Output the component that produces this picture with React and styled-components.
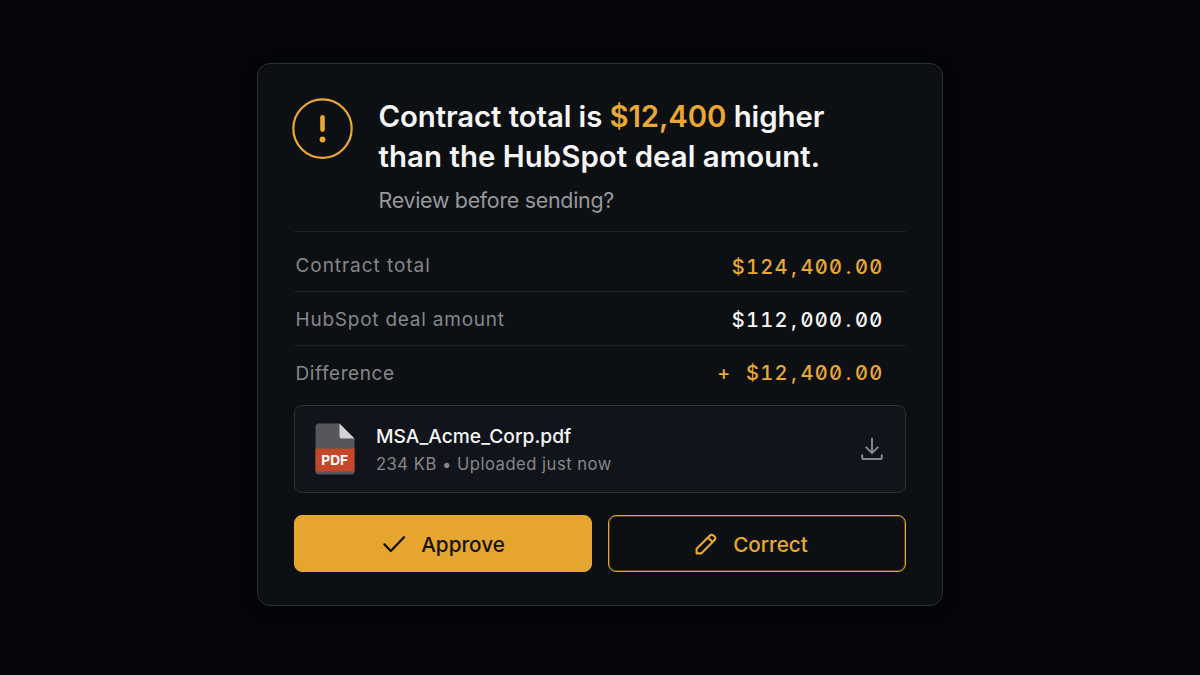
import React from 'react'
import styled, { createGlobalStyle } from 'styled-components'

const colors = {
    page: '#040609',
    card: '#0c1013',
    panel: '#11141a',
    border: '#2d3033',
    line: '#1e2124',
    amber: '#e9a832',
    white: '#f6f6f7',
    grey: '#97989d',
    darkGrey: '#85878c'
}

const rows = [
    { label: 'Contract total', value: '$124,400.00', color: colors.amber, height: 60, top: 8, shift: 3, spacing: 0.95 },
    { label: 'HubSpot deal amount', value: '$112,000.00', color: colors.white, height: 54, top: 2, shift: 1, spacing: 0.77 },
    { label: 'Difference', value: '+ $12,400.00', color: colors.amber, height: 60, top: -5, shift: 0, spacing: 0.6 }
]

// commas, dots and spaces are padded so they take as much room as a digit
const Amount = ({ value, color, shift }) => (
    <Value $color={color} $shift={shift}>
        {value.split(/([,. ])/).map((part, i) => (
            /[,. ]/.test(part) ? <Mark key={i} $space={part == ' '}>{part}</Mark> : part
        ))}
    </Value>
)

const AlertIcon = () => (
    <svg width="62" height="62" viewBox="0 0 62 62" fill="none">
        <circle cx="31.5" cy="30.6" r="29.2" stroke={colors.amber} strokeWidth="2.2" />
        <path d="M31.5 19.2v12.4" stroke={colors.amber} strokeWidth="4.6" strokeLinecap="round" />
        <circle cx="31.5" cy="41.5" r="2.9" fill={colors.amber} />
    </svg>
)

const FileIcon = () => (
    <svg width="40" height="52" viewBox="0 0 40 52">
        <path d="M4 .5h20.5L39.5 15.5V48a3.5 3.5 0 0 1-3.5 3.5H4A3.5 3.5 0 0 1 .5 48V4A3.5 3.5 0 0 1 4 .5z" fill="#55575b" />
        <path d="M24.5 .5 39.5 15.5H27a2.5 2.5 0 0 1-2.5-2.5z" fill="#d3d4d6" />
        <path d="M.5 25.5h39v23h-39z" fill="#c4472a" />
        <text x="19.7" y="41.8" textAnchor="middle" fontFamily="Inter, sans-serif" fontSize="13.8" fontWeight="700" fill="#fff">PDF</text>
    </svg>
)

const DownloadIcon = () => (
    <svg width="24" height="24" viewBox="0 0 24 24" fill="none" stroke={colors.darkGrey} strokeWidth="2" strokeLinecap="round" strokeLinejoin="round">
        <path d="M12 1.6v14" />
        <path d="m6.2 10.4 5.8 5.6 5.8-5.6" />
        <path d="M2.2 18.2v2.2a1.6 1.6 0 0 0 1.6 1.6h16.4a1.6 1.6 0 0 0 1.6-1.6v-2.2" />
    </svg>
)

const CheckIcon = () => (
    <svg width="24" height="24" viewBox="0 0 24 24" fill="none" stroke="#14120c" strokeWidth="2.3" strokeLinecap="round" strokeLinejoin="round">
        <path d="m2.4 12.4 6.4 6.6L22 5.2" />
    </svg>
)

const PencilIcon = () => (
    <svg width="24" height="24" viewBox="0 0 24 24" fill="none" stroke={colors.amber} strokeWidth="2.1" strokeLinejoin="round">
        <path d="M2.6 21.4v-4.6L16 3.4a2.4 2.4 0 0 1 3.4 0l1.2 1.2a2.4 2.4 0 0 1 0 3.4L7.2 21.4z" />
        <path d="m14 5.4 4.6 4.6" />
    </svg>
)

const App = () => {
    return (
        <Page>
            <GlobalStyle />
            <Card>
                <Header>
                    <AlertIcon />
                    <div>
                        <Title>
                            <TitleLine $spacing={-0.1}>Contract total is <Highlight>$12,400</Highlight> higher</TitleLine>
                            <TitleLine $spacing={0.05}>than the HubSpot deal amount.</TitleLine>
                        </Title>
                        <Subtitle>Review before sending?</Subtitle>
                    </div>
                </Header>
                {rows.map((row) => (
                    <Row key={row.label} $height={row.height} $top={row.top}>
                        <Label $spacing={row.spacing}>{row.label}</Label>
                        <Amount value={row.value} color={row.color} shift={row.shift} />
                    </Row>
                ))}
                <File>
                    <FileIcon />
                    <FileInfo>
                        <FileName>MSA_Acme_Corp.pdf</FileName>
                        <FileMeta>234 KB • Uploaded just now</FileMeta>
                    </FileInfo>
                    <DownloadIcon />
                </File>
                <Actions>
                    <Button $primary>
                        <CheckIcon />
                        <ButtonText>Approve</ButtonText>
                    </Button>
                    <Button>
                        <PencilIcon />
                        <ButtonText>Correct</ButtonText>
                    </Button>
                </Actions>
            </Card>
        </Page>
    )
}

export default App


const GlobalStyle = createGlobalStyle`
    * {
        box-sizing: border-box;
    }
    body {
        margin: 0;
        background: ${colors.page};
        font-family: Inter, "Liberation Sans", sans-serif;
    }
    svg {
        display: block;
        flex-shrink: 0;
    }
`

const Page = styled.div`
    display: flex;
    justify-content: center;
    align-items: flex-start;
    height: 675px;
    padding-top: 63px;
`

const Card = styled.div`
    width: 686px;
    height: 543px;
    padding: 33px 36px 0;
    background: ${colors.card};
    border: 1px solid ${colors.border};
    border-radius: 13px;
    box-shadow: 0 4px 16px rgba(0, 0, 0, 0.5);
`

const Header = styled.div`
    display: flex;
    gap: 25.5px;
    height: 134px;
    margin-left: -3px;

    > svg {
        margin-top: 1px;
    }
`

const Title = styled.h1`
    margin: 0;
    font-size: 29.4px;
    font-weight: 600;
    line-height: 40px;
    color: ${colors.white};
    white-space: nowrap;
`

const TitleLine = styled.span`
    display: block;
    letter-spacing: ${(p) => p.$spacing}px;
`

const Highlight = styled.span`
    color: ${colors.amber};
`

const Subtitle = styled.p`
    margin: 9px 0 0;
    font-size: 21.4px;
    line-height: 28px;
    letter-spacing: -0.28px;
    color: ${colors.grey};
`

const Row = styled.div`
    display: flex;
    justify-content: space-between;
    align-items: center;
    height: ${(p) => p.$height}px;
    padding: ${(p) => p.$top > 0 ? p.$top : 0}px 22.5px ${(p) => p.$top < 0 ? -p.$top : 0}px 1.5px;
    border-top: 1px solid ${colors.line};
`

const Label = styled.span`
    font-size: 19px;
    letter-spacing: ${(p) => p.$spacing}px;
    color: ${colors.darkGrey};
`

const Value = styled.span`
    padding-top: ${(p) => p.$shift}px;
    font-size: 20px;
    font-weight: 500;
    font-feature-settings: 'tnum', 'zero';
    letter-spacing: 1.25px;
    color: ${(p) => p.$color};
    white-space: pre;
`

const Mark = styled.span`
    padding: 0 ${(p) => p.$space ? 4 : 2.65}px;
`

const File = styled.div`
    display: flex;
    align-items: center;
    height: 88px;
    padding: 0 21px 0 20px;
    background: ${colors.panel};
    border: 1px solid ${colors.border};
    border-radius: 8px;
`

const FileInfo = styled.div`
    flex: 1;
    margin-left: 21px;
    padding-top: 2px;
`

const FileName = styled.div`
    font-size: 19.2px;
    font-weight: 500;
    line-height: 28px;
    color: ${colors.white};
`

const FileMeta = styled.div`
    font-size: 16.6px;
    line-height: 28px;
    letter-spacing: 0.5px;
    color: ${colors.darkGrey};
`

const Actions = styled.div`
    display: grid;
    grid-template-columns: 1fr 1fr;
    gap: 16px;
    margin-top: 22px;
`

const Button = styled.button`
    display: flex;
    justify-content: center;
    align-items: center;
    gap: 15px;
    height: 57px;
    padding: 0 ${(p) => p.$primary ? 0 : 13}px 0 1px;
    background: ${(p) => p.$primary ? '#e6a52e' : 'transparent'};
    border: 1px solid ${colors.amber};
    border-radius: 8px;
    box-shadow: inset 0 0 0 1px rgba(233, 168, 50, 0.3);
    font-family: inherit;
    font-size: 20.7px;
    font-weight: 500;
    color: ${(p) => p.$primary ? '#14120c' : colors.amber};
`

const ButtonText = styled.span`
    padding-top: 2px;
`
